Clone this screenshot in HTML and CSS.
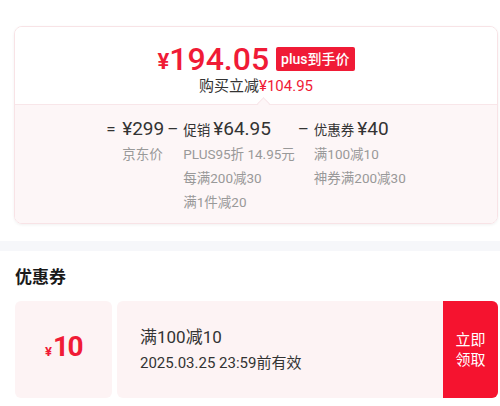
FILE: index.html
```html
<!DOCTYPE html>
<html>
<head>
    <meta charset="utf-8">
    <title>到手价</title>
    <meta name="viewport" content="width=device-width, initial-scale=1">
    <link rel="stylesheet" href="styles.css">
</head>
<body>
    <div class="price-card">
        <div class="price-top">
            <div class="final-price">
                <span class="yen">¥</span><span class="amount">194.05</span>
                <span class="badge">plus到手价</span>
            </div>
            <div class="saving">购买立减<span class="red">¥104.95</span></div>
        </div>

        <div class="price-detail">
            <div class="calc-col">
                <span class="op">=</span>
                <div class="calc-body">
                    <div class="calc-head"><span class="num">¥299</span></div>
                    <div class="calc-line">京东价</div>
                </div>
            </div>
            <div class="calc-col">
                <span class="op">–</span>
                <div class="calc-body">
                    <div class="calc-head"><span class="lbl">促销</span><span class="num">¥64.95</span></div>
                    <div class="calc-line">PLUS95折 14.95元</div>
                    <div class="calc-line">每满200减30</div>
                    <div class="calc-line">满1件减20</div>
                </div>
            </div>
            <div class="calc-col">
                <span class="op">–</span>
                <div class="calc-body">
                    <div class="calc-head"><span class="lbl">优惠券</span><span class="num">¥40</span></div>
                    <div class="calc-line">满100减10</div>
                    <div class="calc-line">神券满200减30</div>
                </div>
            </div>
        </div>
    </div>

    <div class="divider-band"></div>

    <div class="coupons">
        <h2 class="section-title">优惠券</h2>
        <div class="coupon">
            <div class="coupon-value"><span class="c-yen">¥</span><span class="c-num">10</span></div>
            <div class="coupon-main">
                <div class="coupon-info">
                    <div class="coupon-rule">满100减10</div>
                    <div class="coupon-date">2025.03.25 23:59前有效</div>
                </div>
                <button class="coupon-btn">立即<br>领取</button>
            </div>
        </div>
    </div>
</body>
</html>
```

FILE: styles.css
```css
body {
    margin: 0;
    padding-top: 26px;
    background: #fff;
    font-family: Roboto, "Noto Sans CJK SC", sans-serif;
    color: #333;
}
.red {
    color: #f01b36;
}
.price-card {
    margin: 0 2px 0 14px;
    border: 1px solid #f8e3e6;
    border-radius: 8px;
    overflow: hidden;
    box-shadow: 0 1px 3px rgba(0,0,0,0.06);
}
.price-top {
    height: 64px;
    padding-top: 13px;
    background: #fff;
    display: flex;
    flex-direction: column;
    align-items: center;
}
.final-price {
    display: flex;
    align-items: center;
    height: 38px;
    line-height: 1;
    color: #f01b36;
}
.yen {
    font-size: 22px;
    font-weight: 700;
    margin-top: 5px;
}
.amount {
    font-size: 32px;
    font-weight: 500;
}
.badge {
    margin-left: 7px;
    height: 24px;
    line-height: 24px;
    padding: 0 5px;
    background: #f01b36;
    color: #fff;
    font-size: 14px;
    font-weight: 500;
    border-radius: 2px;
}
.saving {
    font-size: 15px;
    line-height: 20px;
    margin-top: -2px;
    color: #333;
}
.price-detail {
    position: relative;
    border-top: 1px solid #f8e6e9;
    background: #fdf6f7;
    padding: 11px 0 9px;
    display: flex;
    justify-content: center;
    gap: 3px;
}
.price-detail::before {
    content: "";
    position: absolute;
    left: 244px;
    top: -6px;
    width: 8px;
    height: 8px;
    background: #fdf6f7;
    border-left: 1px solid #f8e6e9;
    border-top: 1px solid #f8e6e9;
    transform: rotate(45deg);
}
.calc-col {
    display: flex;
}
.op {
    width: 16px;
    line-height: 26px;
    font-size: 17px;
    color: #333;
}
.calc-head {
    height: 26px;
    line-height: 26px;
    white-space: nowrap;
}
.num {
    font-size: 19px;
    color: #333;
}
.lbl {
    font-size: 13.5px;
    margin-right: 3px;
    color: #333;
}
.calc-line {
    line-height: 24px;
    font-size: 13.5px;
    color: #999;
    white-space: nowrap;
}
.divider-band {
    margin-top: 17px;
    height: 10px;
    background: #f6f7fa;
}
.coupons {
    padding: 8px 2px 0 15px;
}
.section-title {
    margin: 0 0 6px;
    font-size: 17px;
    line-height: 36px;
    font-weight: 700;
    color: #1a1a1a;
}
.coupon {
    display: flex;
    height: 97px;
    gap: 5px;
}
.coupon-value {
    width: 97px;
    background: #fdf3f4;
    border-radius: 6px;
    display: flex;
    align-items: baseline;
    justify-content: center;
    padding-top: 32px;
    box-sizing: border-box;
    line-height: 1;
    color: #f01b36;
}
.c-yen {
    font-size: 13px;
    font-weight: 700;
    margin-right: 1px;
}
.c-num {
    font-size: 28px;
    font-weight: 700;
    letter-spacing: -1.5px;
}
.coupon-main {
    flex: 1;
    display: flex;
    background: #fdf3f4;
    border-radius: 6px;
    overflow: hidden;
}
.coupon-info {
    flex: 1;
    padding-left: 23px;
    display: flex;
    flex-direction: column;
    justify-content: center;
}
.coupon-rule {
    font-size: 17px;
    line-height: 26px;
    color: #333;
}
.coupon-date {
    font-size: 15px;
    line-height: 26px;
    color: #333;
}
.coupon-btn {
    width: 55px;
    border: none;
    background: #f5132f;
    color: #fff;
    font-family: inherit;
    font-size: 15px;
    line-height: 20px;
    padding: 0;
}
```
